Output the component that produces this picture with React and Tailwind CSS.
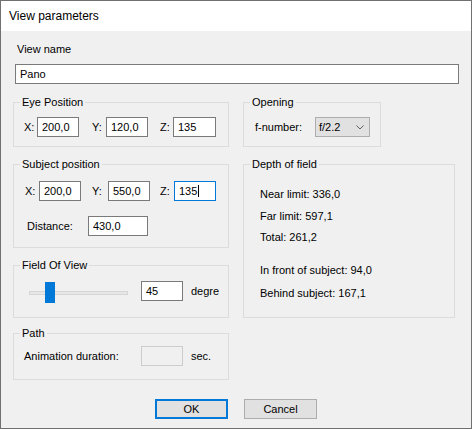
function Group({ title, className = "", children }) {
  return (
    <fieldset className={`border border-[#dcdcdc] ${className}`}>
      <legend className="ml-[6px] px-[2px] leading-[13px]">{title}</legend>
      {children}
    </fieldset>
  );
}

function Field({ value, className = "", focused = false, disabled = false }) {
  const border = focused ? "border-[#0078d7]" : disabled ? "border-[#cccccc]" : "border-[#7a7a7a]";
  const bg = disabled ? "bg-[#f0f0f0]" : "bg-white";
  return (
    <div className={`flex h-[20px] items-center border px-[4px] ${border} ${bg} ${className}`}>
      <span>{value}</span>
      {focused && <span className="ml-[1px] h-[12px] w-px bg-black" />}
    </div>
  );
}

const App = () => {
  return (
    <div className="h-[429px] w-[472px] border border-[#707070] bg-[#f0f0f0] font-['Liberation_Sans',Arial,sans-serif] text-[11px] leading-[13px] text-black">
      <div className="flex h-[30px] items-center bg-white pl-[8px] text-[12px]">View parameters</div>

      <div className="pl-[12px] pt-[12px]">
        <div className="pl-[4px]">View name</div>
        <Field value="Pano" className="ml-[2px] mt-[8px] w-[444px]" />

        <div className="mt-[12px] flex gap-[14px]">
          {/* left column */}
          <div className="flex w-[216px] flex-col">
            <Group title="Eye Position" className="pb-[9px]">
              <div className="mt-[8px] flex items-center pl-[10px]">
                <span className="w-[13px]">X:</span>
                <Field value="200,0" className="w-[42px]" />
                <span className="ml-[13px] w-[14px]">Y:</span>
                <Field value="120,0" className="w-[42px]" />
                <span className="ml-[12px] w-[13px]">Z:</span>
                <Field value="135" className="w-[43px]" />
              </div>
            </Group>

            <Group title="Subject position" className="mt-[11px] pb-[11px]">
              <div className="mt-[10px] flex items-center pl-[11px]">
                <span className="w-[14px]">X:</span>
                <Field value="200,0" className="w-[42px]" />
                <span className="ml-[11px] w-[16px]">Y:</span>
                <Field value="550,0" className="w-[42px]" />
                <span className="ml-[10px] w-[14px]">Z:</span>
                <Field value="135" focused className="w-[42px]" />
              </div>
              <div className="mt-[15px] flex items-center pl-[13px]">
                <span className="w-[61px]">Distance:</span>
                <Field value="430,0" className="w-[60px]" />
              </div>
            </Group>

            <Group title="Field Of View" className="mt-[11px] pb-[16px]">
              <div className="mt-[9px] flex items-center pl-[15px]">
                <div className="relative h-[20px] w-[99px]">
                  <div className="mt-[10px] h-[4px] w-full border border-[#d6d6d6] bg-[#e7e7e7]" />
                  <div className="absolute left-[16px] top-[1px] h-[21px] w-[10px] bg-[#0078d7]" />
                </div>
                <Field value="45" className="ml-[13px] w-[42px]" />
                <span className="ml-[8px] w-[28px] overflow-hidden whitespace-nowrap">degrees</span>
              </div>
            </Group>

            <Group title="Path" className="mt-[9px] pb-[13px]">
              <div className="mt-[6px] flex items-center pl-[10px]">
                <span className="w-[117px]">Animation duration:</span>
                <Field value="" disabled className="w-[42px]" />
                <span className="ml-[8px]">sec.</span>
              </div>
            </Group>
          </div>

          {/* right column */}
          <div className="flex w-[212px] flex-col items-start">
            <Group title="Opening" className="w-[138px] pb-[9px]">
              <div className="mt-[8px] flex items-center pl-[11px]">
                <span className="w-[60px]">f-number:</span>
                <div className="flex h-[20px] w-[55px] items-center justify-between border border-[#adadad] bg-[#e1e1e1] pl-[3px] pr-[5px]">
                  <span>f/2.2</span>
                  <svg width="8" height="5" viewBox="0 0 8 5" fill="none">
                    <path d="M0.5 0.5 L4 4 L7.5 0.5" stroke="#606060" strokeWidth="1" />
                  </svg>
                </div>
              </div>
            </Group>

            <Group title="Depth of field" className="mt-[11px] w-[212px] pb-[17px]">
              <div className="flex flex-col pl-[16px]">
                <span className="mt-[17px]">Near limit: 336,0</span>
                <span className="mt-[9px]">Far limit: 597,1</span>
                <span className="mt-[8px]">Total: 261,2</span>
                <span className="mt-[20px]">In front of subject: 94,0</span>
                <span className="mt-[10px]">Behind subject: 167,1</span>
              </div>
            </Group>
          </div>
        </div>
      </div>

      <div className="mt-[19px] flex justify-center gap-[16px]">
        <button className="flex h-[20px] w-[73px] items-center justify-center border-2 border-[#0078d7] bg-[#e1e1e1]">OK</button>
        <button className="flex h-[20px] w-[73px] items-center justify-center border border-[#adadad] bg-[#e1e1e1]">Cancel</button>
      </div>
    </div>
  );
};

export default App;
